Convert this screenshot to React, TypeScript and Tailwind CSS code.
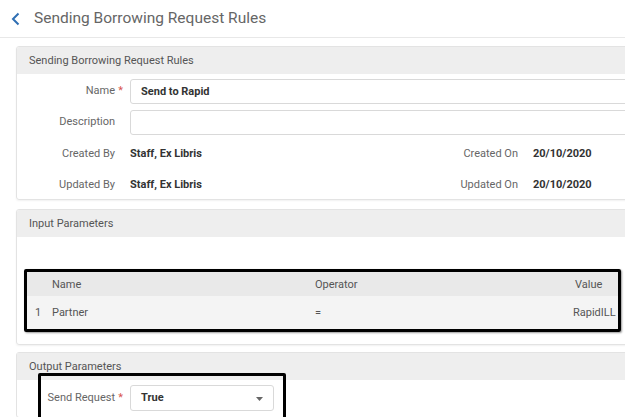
import React from 'react';

const Label: React.FC<{ text: string; required?: boolean }> = ({ text, required }) => (
  <div className="relative w-[98px] shrink-0 text-right text-[11px] text-[#666]">
    {text}
    {required && <span className="absolute -right-[8px] top-0 text-[#d9534f]">*</span>}
  </div>
);

const CardHeader: React.FC<{ title: string }> = ({ title }) => (
  <div className="flex h-[27px] items-center bg-[#eeeeee] pl-[12px] pt-[2px] text-[11px] text-[#555]">{title}</div>
);

export default function App() {
  return (
    <div className="h-[417px] w-[625px] overflow-hidden bg-white font-['Roboto',sans-serif]">
      {/* page header */}
      <div className="flex h-[38px] items-center gap-[13px] border-b border-[#e8e8e8] pl-[11px]">
        <svg width="10" height="14" viewBox="0 0 10 14" fill="none">
          <path d="M7.5 1.5 L2 7 L7.5 12.5" stroke="#2f6fb3" strokeWidth="2" />
        </svg>
        <span className="text-[15.5px] text-[#666]">Sending Borrowing Request Rules</span>
      </div>

      <div className="flex flex-col pl-4 pt-2">
        {/* general card */}
        <div className="w-[620px] overflow-hidden rounded-[3px] border border-[#e3e3e3] shadow-[0_1px_2px_rgba(0,0,0,0.06)]">
          <CardHeader title="Sending Borrowing Request Rules" />
          <div className="flex flex-col gap-[6px] pb-[2px] pt-[5px]">
            <div className="flex items-center gap-[15px]">
              <Label text="Name" required />
              <div className="flex h-[25px] flex-1 items-center rounded-[3px] border border-[#d9d9d9] pl-[10px] pt-[1px] text-[11px] font-bold text-[#333]">
                Send to Rapid
              </div>
            </div>
            <div className="flex items-center gap-[15px]">
              <Label text="Description" />
              <div className="h-[25px] flex-1 rounded-[3px] border border-[#d9d9d9]" />
            </div>
            <div className="flex h-[25px] items-center pt-[2px]">
              <Label text="Created By" />
              <span className="ml-[15px] w-[100px] text-[11px] font-bold text-[#333]">Staff, Ex Libris</span>
              <span className="w-[288px] text-right text-[11px] text-[#666]">Created On</span>
              <span className="ml-[15px] text-[11px] font-bold text-[#333]">20/10/2020</span>
            </div>
            <div className="flex h-[25px] items-center pt-[2px]">
              <Label text="Updated By" />
              <span className="ml-[15px] w-[100px] text-[11px] font-bold text-[#333]">Staff, Ex Libris</span>
              <span className="w-[288px] text-right text-[11px] text-[#666]">Updated On</span>
              <span className="ml-[15px] text-[11px] font-bold text-[#333]">20/10/2020</span>
            </div>
          </div>
        </div>

        {/* input parameters */}
        <div className="mt-[9px] w-[620px] overflow-hidden rounded-[3px] border border-[#e3e3e3] shadow-[0_1px_2px_rgba(0,0,0,0.06)]">
          <CardHeader title="Input Parameters" />
          <div className="pb-[12px] pl-[7px] pt-[32px]">
            <div className="w-[597px] rounded-[2px] border-[3px] border-black text-[11px] text-[#555] shadow-[1px_1px_2px_rgba(0,0,0,0.4)]">
              <div className="flex h-[24px] items-center bg-[#e9e9e9] pt-[2px]">
                <span className="w-[25px]" />
                <span className="w-[263px]">Name</span>
                <span className="w-[260px]">Operator</span>
                <span>Value</span>
              </div>
              <div className="flex h-[33px] items-center bg-[#f4f4f4] pt-[2px]">
                <span className="w-[25px] pl-[8px]">1</span>
                <span className="w-[263px]">Partner</span>
                <span className="w-[258px]">=</span>
                <span className="whitespace-nowrap">RapidILL</span>
              </div>
            </div>
          </div>
        </div>

        {/* output parameters */}
        <div className="relative mt-[7px] w-[620px] rounded-[3px] border border-[#e3e3e3]">
          <CardHeader title="Output Parameters" />
          <div className="flex items-center gap-[15px] pt-[5px] pb-[6px]">
            <Label text="Send Request" required />
            <div className="flex h-[26px] w-[144px] items-center justify-between rounded-[3px] border border-[#d9d9d9] pl-[10px] pr-[10px] pt-[1px] text-[11px] font-bold text-[#333]">
              True
              <svg width="7" height="4" viewBox="0 0 7 4">
                <path d="M0 0 H7 L3.5 4 Z" fill="#666" />
              </svg>
            </div>
          </div>
          <div className="absolute left-[21px] top-[20px] h-[60px] w-[248px] rounded-[2px] border-[3px] border-black" />
        </div>
      </div>
    </div>
  );
}
